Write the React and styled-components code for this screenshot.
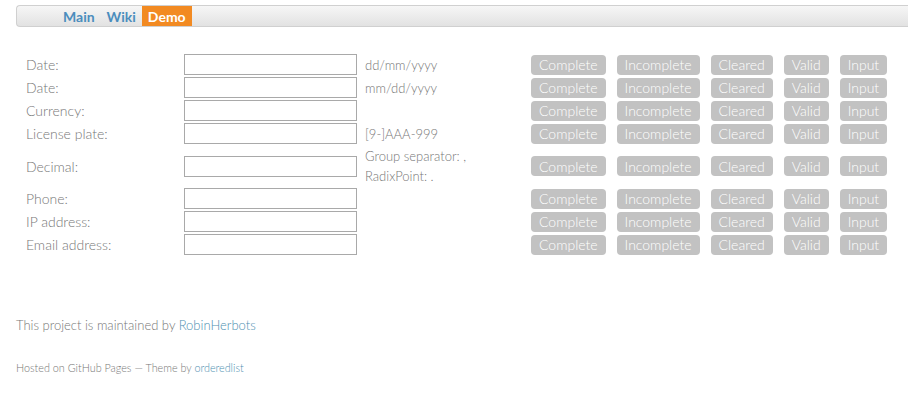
import React from "react";
import styled, { createGlobalStyle } from "styled-components";

const Global = createGlobalStyle`
  html, body { margin: 0; padding: 0; background: #fff; overflow: hidden; }
  body { font-family: Lato, "Liberation Sans", sans-serif; font-weight: 300; color: #777; }
`;

const Page = styled.div`
  padding: 5px 0 0 16px;
  width: 908px;
  box-sizing: border-box;
`;

const Nav = styled.nav`
  display: flex;
  align-items: stretch;
  width: 920px;
  height: 22px;
  box-sizing: border-box;
  padding-left: 40px;
  border: 1px solid #d0d0d0;
  border-right: none;
  border-radius: 4px 0 0 4px;
  background: linear-gradient(#f6f6f6, #e2e2e2);
`;

const NavLink = styled.a`
  display: flex;
  align-items: center;
  padding: 0 6px;
  font-weight: 700;
  font-size: 14px;
  text-decoration: none;
  color: ${p => (p.$active ? "#fff" : "#4b8dbd")};
  background: ${p => (p.$active ? "#f28a22" : "transparent")};
`;

const Grid = styled.div`
  display: grid;
  grid-template-columns: 158px 181px 166px auto;
  row-gap: 2px;
  margin: 27px 0 0 10px;
  font-size: 13px;
`;

const Label = styled.div`
  display: flex;
  align-items: center;
  min-height: 21px;
  font-size: 14px;
`;

const Field = styled.div`
  display: flex;
  align-items: center;
`;

const Input = styled.input`
  width: 173px;
  height: 21px;
  box-sizing: border-box;
  border: 1px solid #a9a9a9;
  margin: 0;
  padding: 0;
`;

const Hint = styled.div`
  display: flex;
  flex-direction: column;
  justify-content: center;
  line-height: 20px;
`;

const Buttons = styled.div`
  display: flex;
  align-items: center;
  gap: 11px;
`;

const Btn = styled.span`
  display: inline-flex;
  align-items: center;
  height: 20px;
  padding: 0 8px;
  border-radius: 4px;
  background: #c2c2c2;
  color: #fff;
  font-size: 14px;
`;

const Footer = styled.footer`
  margin-top: 62px;
`;

const Maint = styled.p`
  margin: 0;
  font-size: 13px;
  color: #777;
`;

const Hosted = styled.p`
  margin: 28px 0 0;
  font-size: 10.8px;
  color: #777;
`;

const Link = styled.a`
  color: #4e8fb1;
  text-decoration: none;
`;

const rows = [
  { label: "Date:", hint: ["dd/mm/yyyy"] },
  { label: "Date:", hint: ["mm/dd/yyyy"] },
  { label: "Currency:", hint: [] },
  { label: "License plate:", hint: ["[9-]AAA-999"] },
  { label: "Decimal:", hint: ["Group separator: ,", "RadixPoint: ."] },
  { label: "Phone:", hint: [] },
  { label: "IP address:", hint: [] },
  { label: "Email address:", hint: [] },
];

const btns = ["Complete", "Incomplete", "Cleared", "Valid", "Input"];

export default function App() {
  return (
    <>
      <Global />
      <Page>
        <Nav>
          <NavLink href="#">Main</NavLink>
          <NavLink href="#">Wiki</NavLink>
          <NavLink href="#" $active>Demo</NavLink>
        </Nav>
        <Grid>
          {rows.map((r, i) => (
            <React.Fragment key={i}>
              <Label>{r.label}</Label>
              <Field><Input /></Field>
              <Hint>{r.hint.map(h => <span key={h}>{h}</span>)}</Hint>
              <Buttons>
                {btns.map(b => <Btn key={b}>{b}</Btn>)}
              </Buttons>
            </React.Fragment>
          ))}
        </Grid>
        <Footer>
          <Maint>This project is maintained by <Link href="#">RobinHerbots</Link></Maint>
          <Hosted>Hosted on GitHub Pages — Theme by <Link href="#">orderedlist</Link></Hosted>
        </Footer>
      </Page>
    </>
  );
}
